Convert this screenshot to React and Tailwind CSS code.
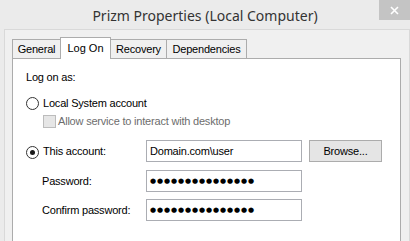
const ui = { fontFamily: '"Liberation Sans", Arial, sans-serif' };

const Tab = ({ label, selected, width }) => {
  if (selected) {
    return (
      <div
        className="relative z-10 -mb-px -ml-px flex h-[22px] items-start justify-center border border-b-0 border-[#acacac] bg-white pt-[2px] text-[11px] text-black"
        style={{ width }}
      >
        {label}
      </div>
    );
  }
  return (
    <div
      className="-ml-px flex h-[19px] items-center justify-center border border-b-0 border-[#acacac] bg-[#f0f0f0] text-[11px] tracking-[-0.2px] text-black first:ml-0"
      style={{ width }}
    >
      {label}
    </div>
  );
};

const Radio = ({ checked }) => (
  <div className="flex h-[13px] w-[13px] items-center justify-center rounded-full border border-[#333] bg-white">
    {checked && <div className="h-[5px] w-[5px] rounded-full bg-[#1a1a1a]" />}
  </div>
);

const Field = ({ value, dots }) => (
  <div className="flex h-[22px] w-[156px] items-center border border-[#abadb3] bg-white pl-[3px]">
    {dots ? (
      <span className="text-[7px] leading-none tracking-[0.9px] text-black" style={{ fontFamily: '"DejaVu Sans", sans-serif' }}>
        {'●'.repeat(15)}
      </span>
    ) : (
      <span className="text-[11px] tracking-[-0.2px] text-black">{value}</span>
    )}
  </div>
);

export default function App() {
  return (
    <div className="h-[241px] w-[410px] overflow-hidden bg-[#ebebeb]" style={ui}>
      <div className="relative flex h-[29px] items-center justify-center">
        <span className="pt-[1px] text-[14px] text-[#333]" style={{ fontFamily: '"Noto Sans", sans-serif' }}>
          Prizm Properties (Local Computer)
        </span>
        <div className="absolute right-0 top-0 flex h-[20px] w-[31px] items-center justify-center bg-[#c4c4c4]">
          <svg width="9" height="9" viewBox="0 0 9 9">
            <path d="M1 1L8 8M8 1L1 8" stroke="white" strokeWidth="1.6" />
          </svg>
        </div>
      </div>

      <div className="ml-[4px] h-[212px] border-l border-r border-t border-[#d9d9d9] bg-[#f0f0f0] pl-[7px] pr-[8px] pt-[7px]">
        <div className="flex h-[21px] items-end">
          <Tab label="General" width={49} />
          <Tab label="Log On" width={51} selected />
          <Tab label="Recovery" width={57} />
          <Tab label="Dependencies" width={81} />
        </div>

        <div className="h-[200px] border border-[#acacac] bg-white pl-[13px] text-[11px] tracking-[-0.2px] text-black">
          <div className="mt-[11px] h-[14px] leading-[14px]">Log on as:</div>

          <div className="mt-[13px] flex h-[13px] items-center gap-[4px]">
            <Radio />
            <span>Local System account</span>
          </div>

          <div className="ml-[17px] mt-[5px] flex h-[13px] items-center gap-[2px]">
            <div className="h-[13px] w-[13px] border border-[#bcbcbc] bg-[#e6e6e6]" />
            <span className="text-[#6d6d6d]">Allow service to interact with desktop</span>
          </div>

          <div className="mt-[12px] flex h-[22px] items-center">
            <div className="flex w-[120px] items-center gap-[4px]">
              <div className="mt-[3px]">
                <Radio checked />
              </div>
              <span>This account:</span>
            </div>
            <Field value="Domain.com\user" />
            <div className="ml-[7px] flex h-[22px] w-[73px] items-center justify-center border border-[#acacac] bg-[#e5e5e5]">
              Browse...
            </div>
          </div>

          <div className="mt-[8px] flex h-[22px] items-center">
            <span className="w-[120px] pl-[16px]">Password:</span>
            <Field dots />
          </div>

          <div className="mt-[7px] flex h-[22px] items-center">
            <span className="w-[120px] pl-[16px]">Confirm password:</span>
            <Field dots />
          </div>
        </div>
      </div>
    </div>
  );
}
